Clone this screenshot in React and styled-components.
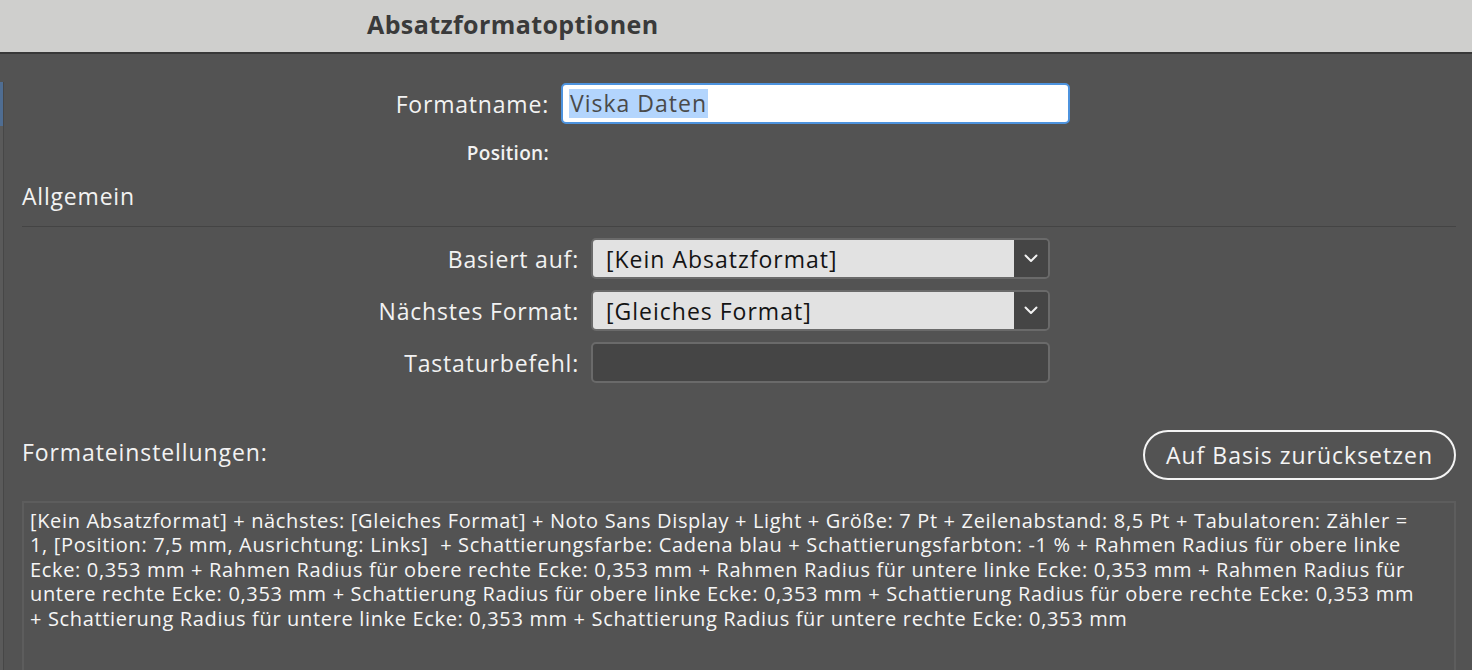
import React from "react";
import styled, { createGlobalStyle } from "styled-components";

const GlobalStyle = createGlobalStyle`
  html, body {
    margin: 0;
    padding: 0;
    background: #535353;
    overflow: hidden;
  }
  * {
    box-sizing: border-box;
  }
`;

const UI_FONT = `"Open Sans", "Noto Sans", "Liberation Sans", sans-serif`;

const Window = styled.div`
  width: 1472px;
  height: 670px;
  display: flex;
  flex-direction: column;
  background: #535353;
  font-family: ${UI_FONT};
  font-weight: 500;
  color: #f2f2f2;
  overflow: hidden;
`;

const TitleBar = styled.div`
  height: 54px;
  flex-shrink: 0;
  display: flex;
  align-items: center;
  padding-left: 367px;
  padding-bottom: 5px;
  background: #cfcfcd;
  border-bottom: 2px solid #383838;
  color: #3a3a3a;
  font-size: 25px;
  font-weight: 700;
  letter-spacing: 0.4px;
`;

const Body = styled.div`
  flex: 1;
  display: flex;
  min-height: 0;
`;

const Rail = styled.div`
  width: 4px;
  margin-top: 28px;
  flex-shrink: 0;
  background: #5a5a5a;
  border-right: 1px solid #474747;
  display: flex;
  flex-direction: column;
`;

const RailMark = styled.div`
  height: 44px;
  background: #4f6d92;
`;

const Content = styled.div`
  flex: 1;
  padding: 29px 16px 0 18px;
  display: flex;
  flex-direction: column;
`;

const FieldRow = styled.div`
  display: grid;
  grid-template-columns: ${(p) => p.$labelWidth}px ${(p) => p.$fieldWidth}px;
  column-gap: 12px;
  align-items: center;
  margin-top: ${(p) => p.$top || 0}px;
`;

const Label = styled.div`
  text-align: right;
  font-size: ${(p) => (p.$small ? 19 : 23)}px;
  font-weight: ${(p) => (p.$small ? 600 : 500)};
  letter-spacing: ${(p) => (p.$small ? 0.3 : 0.8)}px;
  white-space: nowrap;
`;

const NameInput = styled.div`
  height: 41px;
  background: #ffffff;
  border: 2px solid #4d93de;
  border-radius: 5px;
  display: flex;
  align-items: center;
  padding-left: 6px;
  font-size: 23px;
  letter-spacing: 1px;
  color: #4a4a4a;
`;

const Selected = styled.span`
  background: #b3d5fd;
  padding: 0 1px;
  line-height: 29px;
`;

const SectionTitle = styled.div`
  font-size: 23px;
  letter-spacing: 0.8px;
  margin-top: 14px;
  padding-bottom: 14px;
  border-bottom: 1px solid #444444;
`;

const Select = styled.div`
  height: 41px;
  display: flex;
  border: 2px solid #6a6a6a;
  border-radius: 5px;
  overflow: hidden;
`;

const SelectValue = styled.div`
  flex: 1;
  background: #e2e2e2;
  color: #141414;
  font-size: 23px;
  letter-spacing: 1px;
  display: flex;
  align-items: center;
  padding-left: 13px;
`;

const SelectButton = styled.div`
  width: 34px;
  background: #454545;
  display: flex;
  align-items: center;
  justify-content: center;
`;

const ShortcutInput = styled.div`
  height: 41px;
  background: #454545;
  border: 2px solid #6a6a6a;
  border-radius: 5px;
`;

const SettingsHead = styled.div`
  display: flex;
  align-items: center;
  justify-content: space-between;
  margin-top: 47px;
`;

const SettingsTitle = styled.div`
  font-size: 23px;
  letter-spacing: 0.9px;
  padding-bottom: 6px;
`;

const ResetButton = styled.div`
  height: 50px;
  width: 313px;
  border: 2px solid #f4f4f4;
  border-radius: 25px;
  display: flex;
  align-items: center;
  justify-content: center;
  font-size: 23px;
  letter-spacing: 1px;
  color: #f4f4f4;
`;

const SettingsBox = styled.div`
  flex: 1;
  margin-top: 21px;
  border: 2px solid #5d5d5d;
  border-bottom: none;
  padding: 6px 6px 0 6px;
  font-size: 20px;
  letter-spacing: 0.66px;
  line-height: 24.4px;
  color: #f6f6f6;
`;

const SettingsLine = styled.div`
  white-space: pre;
`;

const Chevron = () => (
  <svg width="14" height="9" viewBox="0 0 14 9" fill="none">
    <path d="M1.5 1.5 L7 7 L12.5 1.5" stroke="#f2f2f2" strokeWidth="2" strokeLinecap="round" strokeLinejoin="round" />
  </svg>
);

const settingsLines = [
  "[Kein Absatzformat] + nächstes: [Gleiches Format] + Noto Sans Display + Light + Größe: 7 Pt + Zeilenabstand: 8,5 Pt + Tabulatoren: Zähler =",
  "1, [Position: 7,5 mm, Ausrichtung: Links]  + Schattierungsfarbe: Cadena blau + Schattierungsfarbton: -1 % + Rahmen Radius für obere linke",
  "Ecke: 0,353 mm + Rahmen Radius für obere rechte Ecke: 0,353 mm + Rahmen Radius für untere linke Ecke: 0,353 mm + Rahmen Radius für",
  "untere rechte Ecke: 0,353 mm + Schattierung Radius für obere linke Ecke: 0,353 mm + Schattierung Radius für obere rechte Ecke: 0,353 mm",
  "+ Schattierung Radius für untere linke Ecke: 0,353 mm + Schattierung Radius für untere rechte Ecke: 0,353 mm",
];

const App = () => {
  return (
    <>
      <GlobalStyle />
      <Window>
        <TitleBar>Absatzformatoptionen</TitleBar>
        <Body>
          <Rail>
            <RailMark />
          </Rail>
          <Content>
            <FieldRow $labelWidth={527} $fieldWidth={509}>
              <Label>Formatname:</Label>
              <NameInput>
                <Selected>Viska Daten</Selected>
              </NameInput>
            </FieldRow>
            <FieldRow $labelWidth={527} $fieldWidth={509} $top={16}>
              <Label $small>Position:</Label>
              <div />
            </FieldRow>

            <SectionTitle>Allgemein</SectionTitle>

            <FieldRow $labelWidth={557} $fieldWidth={459} $top={11}>
              <Label>Basiert auf:</Label>
              <Select>
                <SelectValue>[Kein Absatzformat]</SelectValue>
                <SelectButton>
                  <Chevron />
                </SelectButton>
              </Select>
            </FieldRow>
            <FieldRow $labelWidth={557} $fieldWidth={459} $top={11}>
              <Label>Nächstes Format:</Label>
              <Select>
                <SelectValue>[Gleiches Format]</SelectValue>
                <SelectButton>
                  <Chevron />
                </SelectButton>
              </Select>
            </FieldRow>
            <FieldRow $labelWidth={557} $fieldWidth={459} $top={11}>
              <Label>Tastaturbefehl:</Label>
              <ShortcutInput />
            </FieldRow>

            <SettingsHead>
              <SettingsTitle>Formateinstellungen:</SettingsTitle>
              <ResetButton>Auf Basis zurücksetzen</ResetButton>
            </SettingsHead>

            <SettingsBox>
              {settingsLines.map((line, i) => (
                <SettingsLine key={i}>{line}</SettingsLine>
              ))}
            </SettingsBox>
          </Content>
        </Body>
      </Window>
    </>
  );
};

export default App;
